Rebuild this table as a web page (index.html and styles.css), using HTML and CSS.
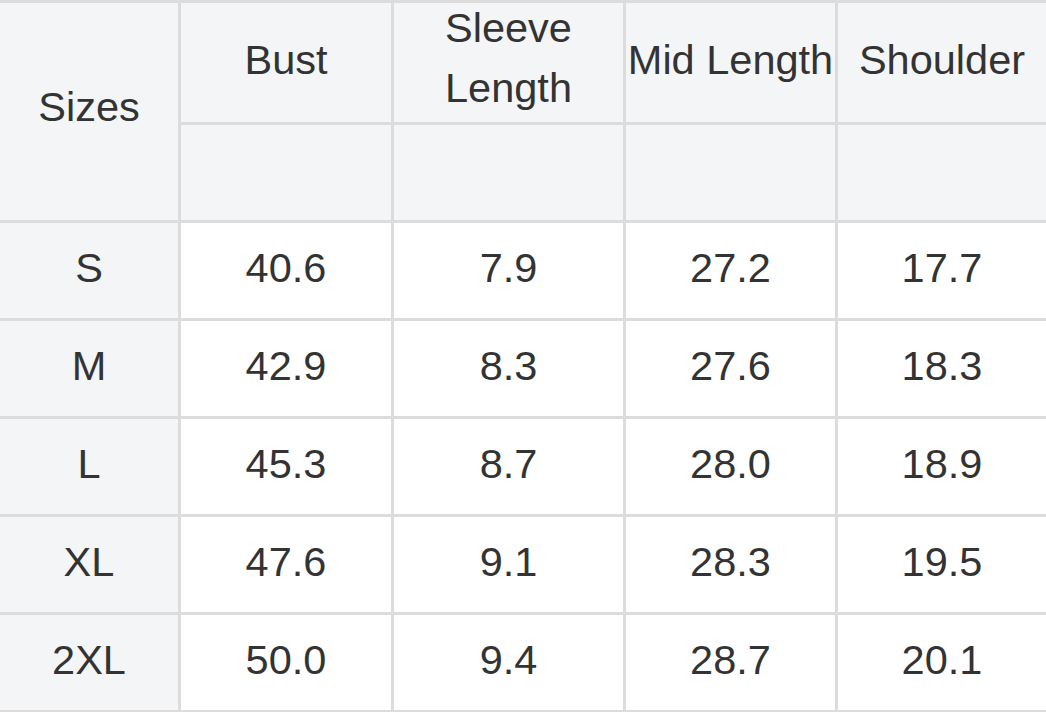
FILE: index.html
```html
<!DOCTYPE html>
<html lang="en">
<head>
<meta charset="utf-8">
<title>Size Chart</title>
<link rel="stylesheet" href="styles.css">
</head>
<body>
<div class="chart">
  <div class="cell head sizes">Sizes</div>
  <div class="cell head">Bust</div>
  <div class="cell head two">Sleeve<br>Length</div>
  <div class="cell head">Mid Length</div>
  <div class="cell head">Shoulder</div>
  <div class="cell head"></div>
  <div class="cell head"></div>
  <div class="cell head"></div>
  <div class="cell head"></div>

  <div class="cell label">S</div>
  <div class="cell">40.6</div>
  <div class="cell">7.9</div>
  <div class="cell">27.2</div>
  <div class="cell">17.7</div>

  <div class="cell label">M</div>
  <div class="cell">42.9</div>
  <div class="cell">8.3</div>
  <div class="cell">27.6</div>
  <div class="cell">18.3</div>

  <div class="cell label">L</div>
  <div class="cell">45.3</div>
  <div class="cell">8.7</div>
  <div class="cell">28.0</div>
  <div class="cell">18.9</div>

  <div class="cell label">XL</div>
  <div class="cell">47.6</div>
  <div class="cell">9.1</div>
  <div class="cell">28.3</div>
  <div class="cell">19.5</div>

  <div class="cell label">2XL</div>
  <div class="cell">50.0</div>
  <div class="cell">9.4</div>
  <div class="cell">28.7</div>
  <div class="cell">20.1</div>
</div>
</body>
</html>
```
FILE: styles.css
```css
html, body {
  margin: 0;
  padding: 0;
  background: #ffffff;
  overflow: hidden;
}

.chart {
  display: grid;
  grid-template-columns: 178px 210px 229px 209px 208px;
  grid-template-rows: 119px 95px 95px 95px 95px 95px 95px;
  gap: 3px;
  padding: 3px 3px 3px 0;
  width: 1049px;
  background: #dcdcdc;
  font-family: "Liberation Sans", Arial, sans-serif;
  font-size: 41.5px;
  color: #333333;
}

.cell {
  display: flex;
  align-items: center;
  justify-content: center;
  text-align: center;
  background: #ffffff;
  white-space: nowrap;
  line-height: 1.2;
  padding-bottom: 6px;
  box-sizing: border-box;
}

.head,
.label {
  background: #f4f5f7;
}

.sizes {
  grid-row: span 2;
  padding-bottom: 10px;
}

.two {
  line-height: 60px;
  padding-bottom: 9px;
}
```
